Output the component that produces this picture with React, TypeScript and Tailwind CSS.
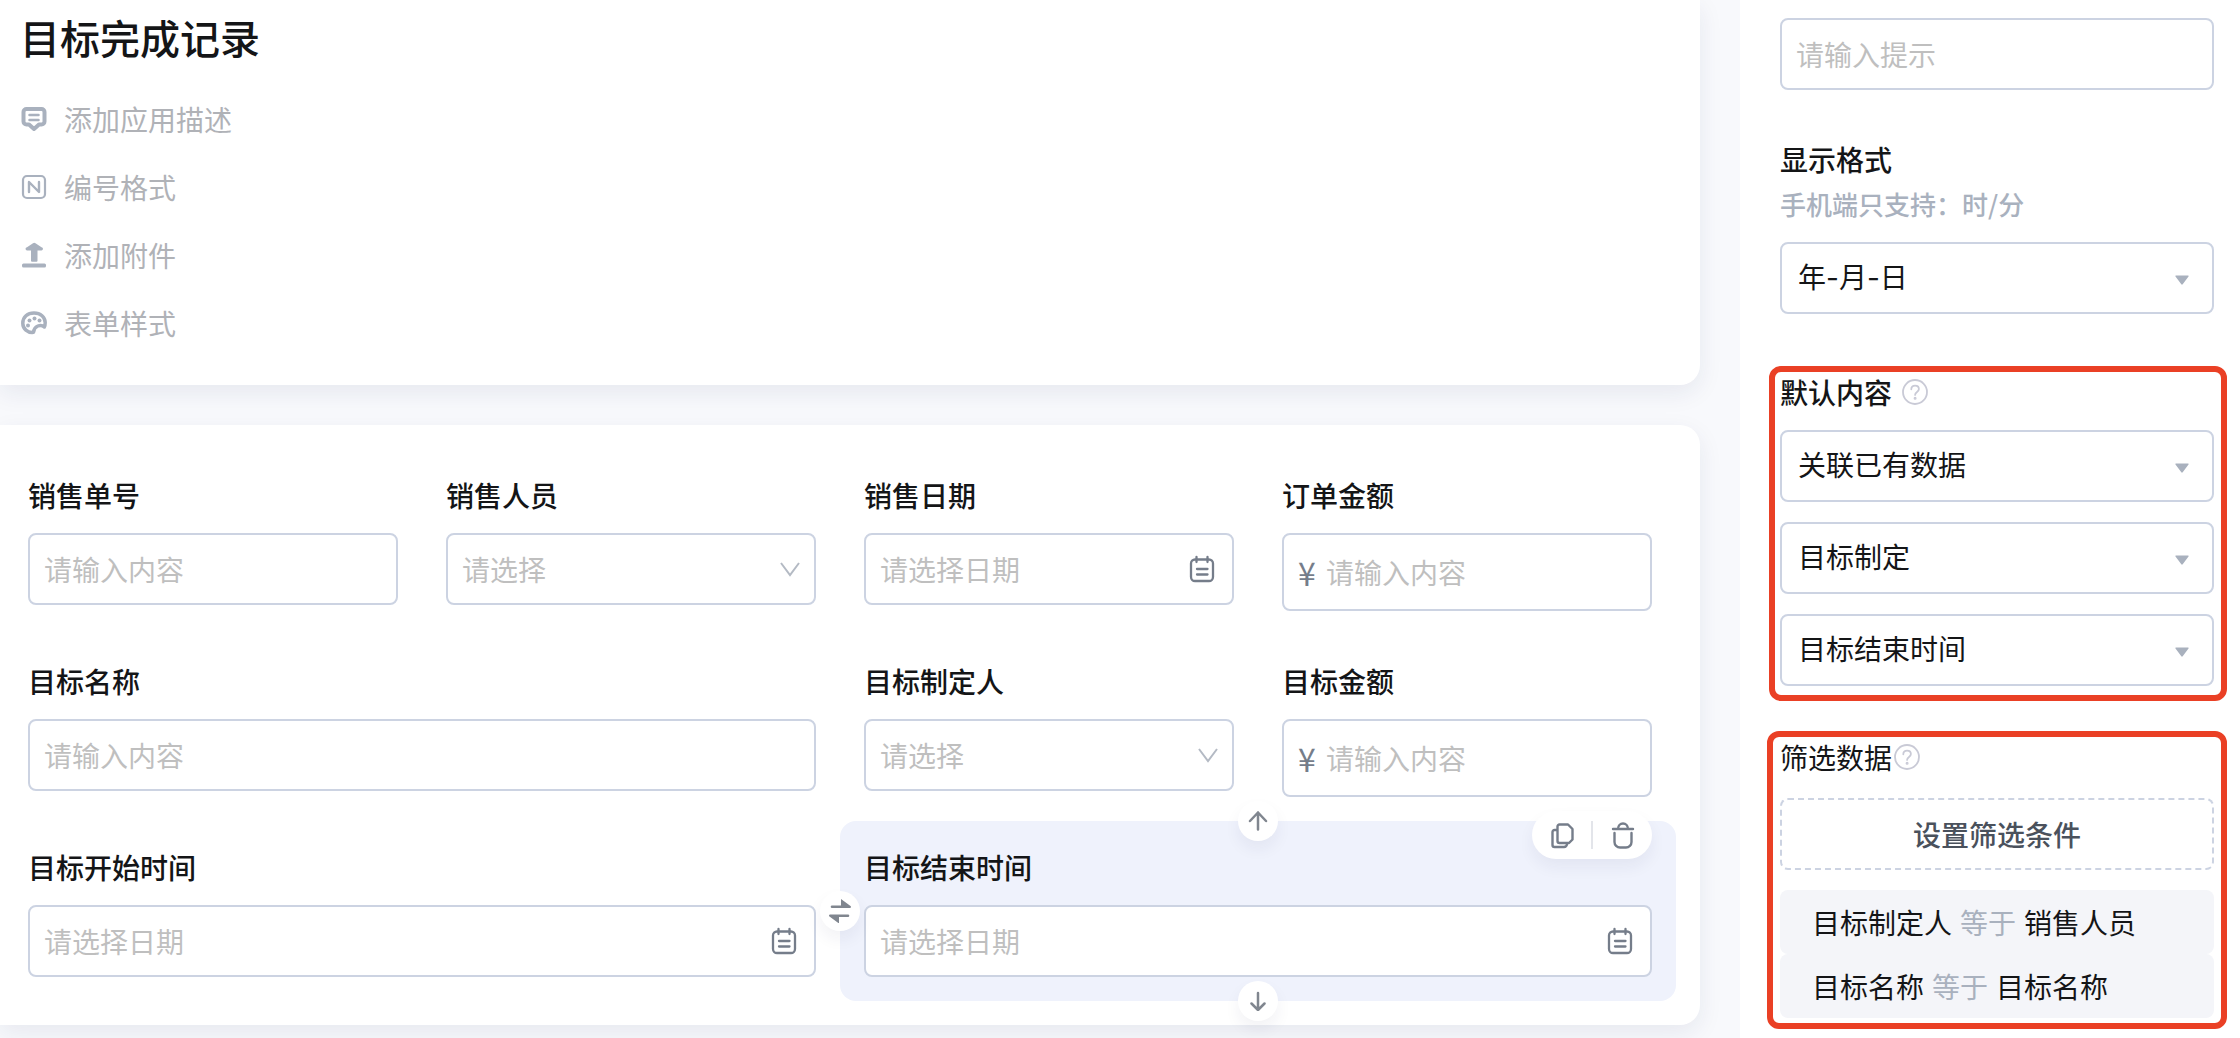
import type { ReactNode } from "react";

function CommentIcon() {
  return (
    <svg className="size-7" viewBox="0 0 28 28" fill="none" stroke="#a9b1be">
      <path d="M6.500 4h15a3 3 0 0 1 3 3v9.500a3 3 0 0 1-3 3H19L14 24l-5-4.500H6.500a3 3 0 0 1-3-3V7a3 3 0 0 1 3-3Z" strokeWidth="4" strokeLinejoin="round" />
      <path d="M9.500 10h9M9.500 15h9" strokeWidth="2.500" strokeLinecap="round" />
    </svg>
  );
}

function NumberIcon() {
  return (
    <svg className="size-7" viewBox="0 0 28 28" fill="none" stroke="#a9b1be" strokeLinecap="round" strokeLinejoin="round">
      <rect x="3" y="3" width="22" height="22" rx="4" strokeWidth="2.200" />
      <path d="M9 19V9l10 10V9" strokeWidth="2.400" />
    </svg>
  );
}

function UploadIcon() {
  return (
    <svg className="size-7" viewBox="0 0 28 28" fill="#a9b1be">
      <path d="M13 2.300a2 2 0 0 1 2.500 0l6 4a1.400 1.400 0 0 1-.3 3.200H17.500v10.300a1 1 0 0 1-1 1H12a1 1 0 0 1-1-1V9.500H7.300A1.400 1.400 0 0 1 7 6.300Z" />
      <rect x="2" y="22.500" width="24" height="4" rx="1.500" />
    </svg>
  );
}

function PaletteIcon() {
  return (
    <svg className="size-7" viewBox="0 0 28 28" fill="none">
      <path d="M13.500 23.300C7.500 24 2.800 19.800 2.800 14.200 2.800 8 7.500 4 14 4c6.500 0 11.200 4.200 11.200 9.500 0 2-.2 3.300-.9 4.500-1.500-1.500-4-2-6.500-1-2.800 1.200-4 3.500-4.300 6.300Z" stroke="#a9b1be" strokeWidth="3.500" strokeLinejoin="round" />
      <g fill="#a9b1be">
        <circle cx="8" cy="16.500" r="2" />
        <circle cx="9.500" cy="11.500" r="2" />
        <circle cx="14.500" cy="9.500" r="2" />
        <circle cx="19.500" cy="11.500" r="2" />
      </g>
    </svg>
  );
}

function CalendarIcon() {
  return (
    <svg className="size-7 shrink-0" viewBox="0 0 28 28" fill="none" stroke="#757d8a" strokeWidth="2.300" strokeLinecap="round">
      <rect x="3" y="4.500" width="22" height="21.500" rx="4" />
      <path d="M8.500 2v5M19.500 2v5M9 14h10.500M9 19.500h10.500" />
    </svg>
  );
}

function ChevronIcon() {
  return (
    <svg className="pointer-events-none absolute top-0 right-4 h-full w-5" viewBox="0 0 20 14" fill="none" stroke="#b4bac4" strokeWidth="2">
      <path d="M1 1l9 12 9-12" />
    </svg>
  );
}

function HelpIcon() {
  return (
    <svg className="size-[26px]" viewBox="0 0 26 26" fill="none" stroke="#c9cad6" strokeWidth="1.800" strokeLinecap="round">
      <circle cx="13" cy="13" r="12" />
      <path d="M9.300 10.300c0-2.200 1.600-3.700 3.800-3.700s3.800 1.400 3.800 3.400c0 3-3.800 2.900-3.800 5.900" />
      <circle cx="13.100" cy="19.300" r=".6" fill="#c9cad6" />
    </svg>
  );
}

const boxClass =
  "w-full rounded-lg border-2 border-[#ccd3e2] bg-white outline-none placeholder:text-[#bfbfbf] placeholder:opacity-100";

type FieldProps = {
  id: string;
  label: string;
  kind: "text" | "select" | "date" | "money";
  wide?: boolean;
  selected?: boolean;
  children?: ReactNode;
};

function Field({ id, label, kind, wide, selected, children }: FieldProps) {
  return (
    <div
      className={`${wide ? "col-span-2" : ""} ${
        selected ? "relative rounded-2xl bg-[#eff2fc]" : ""
      } p-6`}
    >
      <label htmlFor={id} className="mb-4 block leading-[44px] font-medium">
        {label}
      </label>
      {kind === "text" && (
        <input id={id} placeholder="请输入内容" className={`${boxClass} h-[72px] px-[14px]`} />
      )}
      {kind === "select" && (
        <div className="relative">
          <select id={id} className={`${boxClass} h-[72px] appearance-none px-[14px] text-[#bfbfbf]`}>
            <option>请选择</option>
          </select>
          <ChevronIcon />
        </div>
      )}
      {kind === "date" && (
        <div className={`${boxClass} flex h-[72px] items-center pr-4 pl-[14px]`}>
          <input
            id={id}
            placeholder="请选择日期"
            className="min-w-0 flex-1 outline-none placeholder:text-[#bfbfbf]"
          />
          <CalendarIcon />
        </div>
      )}
      {kind === "money" && (
        <div className={`${boxClass} flex h-[78px] items-center px-[14px]`}>
          <span className="w-7 text-[32px] text-[#757d8a]">¥</span>
          <input
            id={id}
            placeholder="请输入内容"
            className="min-w-0 flex-1 outline-none placeholder:text-[#bfbfbf]"
          />
        </div>
      )}
      {children}
    </div>
  );
}

const roundButton =
  "absolute flex size-10 items-center justify-center rounded-full bg-white text-[#80868f] shadow-[0_8px_16px_rgba(30,40,90,0.06)]";

function FieldTools() {
  return (
    <>
      <button aria-label="上移" className={`${roundButton} -top-5 left-1/2 -translate-x-1/2`}>
        <svg className="size-5" viewBox="0 0 20 20" fill="none" stroke="currentColor" strokeWidth="2.500" strokeLinecap="round" strokeLinejoin="round">
          <path d="M10 18.500V1.500M2 10l8-8.500 8 8.500" />
        </svg>
      </button>
      <button aria-label="下移" className={`${roundButton} -bottom-5 left-1/2 -translate-x-1/2`}>
        <svg className="size-5" viewBox="0 0 20 20" fill="none" stroke="currentColor" strokeWidth="2.500" strokeLinecap="round" strokeLinejoin="round">
          <path d="M10 2v17M3.500 12.500L10 19l6.500-6.500" />
        </svg>
      </button>
      <button aria-label="交换" className={`${roundButton} top-1/2 -left-5 -translate-y-1/2`}>
        <svg className="size-6" viewBox="0 0 24 24" fill="currentColor">
          <path d="M13 0l9.500 7a1.100 1.100 0 0 1-.5 2H4a1.300 1.300 0 0 1 0-2.600h9Z" />
          <path d="M11 24.500l-9.500-7a1.100 1.100 0 0 1 .5-2h18a1.300 1.300 0 0 1 0 2.600h-9Z" />
        </svg>
      </button>
      <div className="absolute -top-[10px] right-6 flex h-12 w-[120px] items-center rounded-full bg-white text-[#757d8a] shadow-[0_8px_16px_rgba(30,40,90,0.06)]">
        <button aria-label="复制" className="flex flex-1 justify-center">
          <svg className="size-7" viewBox="0 0 28 28" fill="none" stroke="currentColor" strokeWidth="2.400" strokeLinejoin="round">
            <path d="M9.500 5.500a2 2 0 0 1 2-2h8.500l4.500 4.500v10.500L21 22h-9.500a2 2 0 0 1-2-2Z" />
            <path d="M9.500 9H6.500a2 2 0 0 0-2 2v13a2 2 0 0 0 2 2H16a3 3 0 0 0 3-3v-1" />
          </svg>
        </button>
        <span className="h-7 w-0.5 bg-[#e3e5ea]" />
        <button aria-label="删除" className="flex flex-1 justify-center">
          <svg className="size-7" viewBox="0 0 28 28" fill="none" stroke="currentColor" strokeWidth="2.400" strokeLinecap="round">
            <path d="M4 8h20M9 8a5 5.500 0 0 1 10 0M5.500 12v9a5.500 5.500 0 0 0 5.500 5.500h6a5.500 5.500 0 0 0 5.500-5.500v-9" />
          </svg>
        </button>
      </div>
    </>
  );
}

function SideSelect({ label, value }: { label: string; value: string }) {
  return (
    <div className="relative">
      <select
        aria-label={label}
        className={`${boxClass} block h-[72px] appearance-none px-4 font-[Inter,'Noto_Sans_CJK_SC',sans-serif]`}
      >
        <option>{value}</option>
      </select>
      <svg className="pointer-events-none absolute top-[33px] right-[25px] h-[10px] w-[14px]" viewBox="0 0 14 10" fill="#a9b1be">
        <path d="M1 .5h12a.6.6 0 0 1 .5 1L7.700 9.300a.9.9 0 0 1-1.400 0L.5 1.500A.6.6 0 0 1 1 .5Z" />
      </svg>
    </div>
  );
}

const actions = [
  { text: "添加应用描述", icon: <CommentIcon /> },
  { text: "编号格式", icon: <NumberIcon /> },
  { text: "添加附件", icon: <UploadIcon /> },
  { text: "表单样式", icon: <PaletteIcon /> },
];

const conditions = [
  { field: "目标制定人", target: "销售人员" },
  { field: "目标名称", target: "目标名称" },
];

const cardClass = "bg-white shadow-[0_8px_24px_rgba(30,40,90,0.08)]";

export default function App() {
  return (
    <div className="flex min-h-screen overflow-hidden bg-[#f8f9fc] font-['Noto_Sans_CJK_SC',sans-serif] text-[28px] leading-10 text-[#141517]">
      <main className="min-w-0 flex-1 pr-10">
        <section className={`${cardClass} rounded-br-[20px] px-5 pb-7`}>
          <h1 className="pt-[7px] text-[40px] leading-[60px] font-medium">目标完成记录</h1>
          <ul className="pt-[18px]">
            {actions.map((action) => (
              <li key={action.text}>
                <button className="flex h-[68px] items-center gap-4 text-[#b0b2b7]">
                  {action.icon}
                  {action.text}
                </button>
              </li>
            ))}
          </ul>
        </section>

        <section className={`${cardClass} mt-10 grid grid-cols-4 rounded-r-[20px] py-6 pr-6 pl-1`}>
          <Field id="order-no" label="销售单号" kind="text" />
          <Field id="seller" label="销售人员" kind="select" />
          <Field id="sale-date" label="销售日期" kind="date" />
          <Field id="order-amount" label="订单金额" kind="money" />
          <Field id="goal-name" label="目标名称" kind="text" wide />
          <Field id="goal-owner" label="目标制定人" kind="select" />
          <Field id="goal-amount" label="目标金额" kind="money" />
          <Field id="goal-start" label="目标开始时间" kind="date" wide />
          <Field id="goal-end" label="目标结束时间" kind="date" wide selected>
            <FieldTools />
          </Field>
        </section>
      </main>

      <aside className="w-[500px] shrink-0 bg-white pt-[18px] pr-[26px] pl-10">
        <input aria-label="提示" placeholder="请输入提示" className={`${boxClass} block h-[72px] px-[14px]`} />

        <h2 className="mt-[49px] font-medium">显示格式</h2>
        <p className="mt-[5px] mb-[18px] text-[26px] font-medium text-[#a9b1be]">手机端只支持：时/分</p>
        <SideSelect label="显示格式" value="年-月-日" />

        <section className="mt-[52px] -mr-[13px] -ml-[11px] rounded-xl border-[6px] border-[#ea4025] pr-[7px] pb-[9px] pl-[5px]">
          <h2 className="mb-[18px] flex items-center gap-[10px] font-medium">
            默认内容
            <HelpIcon />
          </h2>
          <div className="flex flex-col gap-5">
            <SideSelect label="默认内容" value="关联已有数据" />
            <SideSelect label="关联表单" value="目标制定" />
            <SideSelect label="关联字段" value="目标结束时间" />
          </div>
        </section>

        <section className="mt-[30px] -mr-[13px] -ml-[13px] rounded-xl border-[6px] border-[#ea4025] pr-[7px] pb-[5px] pl-[7px]">
          <h2 className="mb-[21px] flex items-center gap-0.5">
            筛选数据
            <HelpIcon />
          </h2>
          <button className="mb-5 block h-[72px] w-full rounded-lg border-2 border-dashed border-[#ccd3e2] font-medium text-[#4a515c]">
            设置筛选条件
          </button>
          {conditions.map(({ field, target }) => (
            <p key={field} className="flex gap-2 rounded-lg bg-[#f4f5f9] pl-8 leading-[64px]">
              <span>{field}</span>
              <span className="text-[#a9b1be]">等于</span>
              <span>{target}</span>
            </p>
          ))}
        </section>
      </aside>
    </div>
  );
}
